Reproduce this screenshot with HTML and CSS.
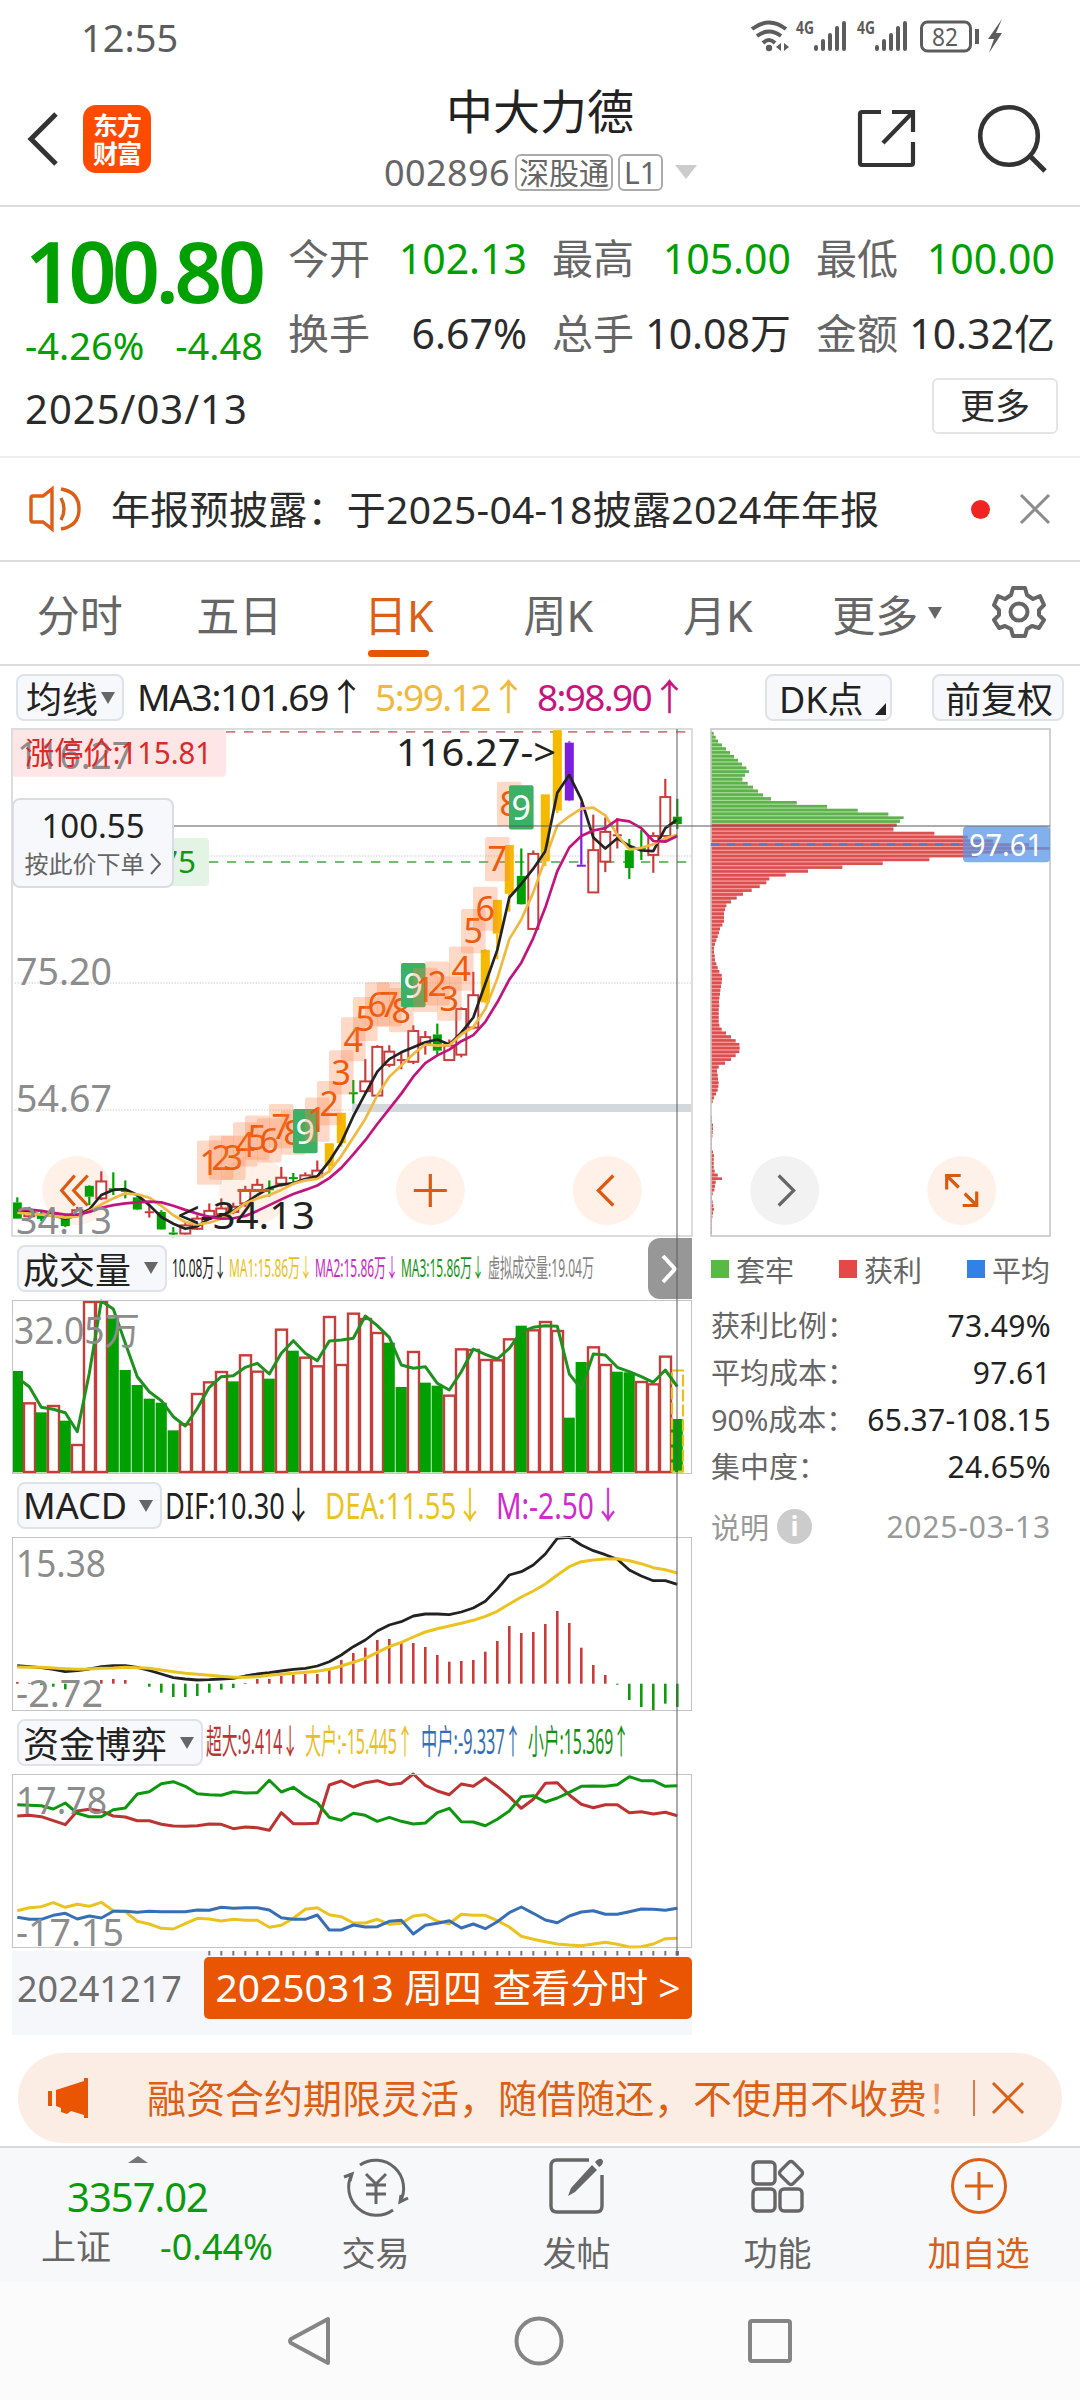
FILE: index.html
```html
<!DOCTYPE html>
<html lang="zh-CN">
<head>
    <meta charset="UTF-8">
    <title>中大力德</title>
    <link rel="stylesheet" href="styles.css">
</head>
<body>
<div class="status">
    <span class="time">12:55</span>
    <svg class="status-icons" width="256" height="36" viewBox="750 19 256 36">
        <g fill="none" stroke="#5c5c5c" stroke-width="4">
            <path d="M752 29Q769 16 786 29"/>
            <path d="M757 36Q769 27 781 36"/>
            <path d="M763 43Q769 37 775 43"/>
        </g>
        <circle cx="769" cy="48" r="3.2" fill="#5c5c5c"/>
        <path d="M781 43v8l-5-4zM784 43v8l5-4z" fill="#5c5c5c"/>
        <g class="net">
            <text x="796" y="34" textLength="18" lengthAdjust="spacingAndGlyphs">4G</text>
            <text x="857" y="34" textLength="18" lengthAdjust="spacingAndGlyphs">4G</text>
        </g>
        <path d="M816 47v2M823 41v8M830 35v14M837 28v21M844 23v26M877 47v2M884 41v8M891 35v14M898 28v21M905 23v26" stroke="#5c5c5c" stroke-width="4" stroke-linecap="round"/>
        <rect x="921.5" y="22" width="49" height="29" rx="6" fill="none" stroke="#5c5c5c" stroke-width="3"/>
        <path d="M977 29v15" stroke="#5c5c5c" stroke-width="4"/>
        <text class="bat" x="932" y="45.5" textLength="26" lengthAdjust="spacingAndGlyphs">82</text>
        <path d="M1002 19l-14 20h6l-5 14 13-20h-6z" fill="#5c5c5c"/>
    </svg>
</div>

<div class="header">
    <svg class="back" width="32" height="54" viewBox="0 0 32 54"><path d="M30 2L5 27l25 25" fill="none" stroke="#333" stroke-width="5"/></svg>
    <div class="logo">东方<br>财富</div>
    <div class="title">
        <h1>中大力德</h1>
        <p><span class="code">002896</span><i class="tag">深股通</i><i class="tag">L1</i><b class="down"></b></p>
    </div>
    <svg class="share" width="60" height="60" viewBox="0 0 60 60">
        <path d="M24 3H5q-2 0-2 2v49q0 2 2 2h49q2 0 2-2V33M35 3h21v20M56 3L26 34" fill="none" stroke="#333" stroke-width="4.2"/>
    </svg>
    <svg class="search" width="70" height="70" viewBox="0 0 70 70">
        <circle cx="32" cy="32" r="28.8" fill="none" stroke="#333" stroke-width="4.6"/>
        <path d="M53 52l15 15" stroke="#333" stroke-width="5"/>
    </svg>
</div>

<div class="quote">
    <div class="price">
        <strong>100.80</strong>
        <p><span>-4.26%</span><span>-4.48</span></p>
    </div>
    <ul class="nums">
        <li><span>今开</span><em class="green">102.13</em></li>
        <li><span>最高</span><em class="green">105.00</em></li>
        <li><span>最低</span><em class="green">100.00</em></li>
        <li><span>换手</span><em>6.67%</em></li>
        <li><span>总手</span><em>10.08万</em></li>
        <li><span>金额</span><em>10.32亿</em></li>
    </ul>
    <div class="date">2025/03/13</div>
    <a class="more">更多</a>
</div>

<div class="notice">
    <svg width="52" height="46" viewBox="0 0 52 46">
        <path d="M3 10h10L22 3v40l-9-7H3q-2 0-2-2V12q0-2 2-2zM31 12q6 11 0 22M31 3q18 3 18 20T31 43" fill="none" stroke="#dc5f16" stroke-width="3.4"/>
    </svg>
    <p>年报预披露：于2025-04-18披露2024年年报</p>
    <i class="dot"></i>
    <svg width="30" height="30" viewBox="0 0 30 30"><path d="M1 1l28 28M29 1L1 29" stroke="#8c8c8c" stroke-width="3"/></svg>
</div>

<ul class="tabs">
    <li>分时</li>
    <li>五日</li>
    <li class="current">日K</li>
    <li>周K</li>
    <li>月K</li>
    <li>更多<b class="down"></b></li>
    <li>
        <svg width="54" height="54" viewBox="-27 -27 54 54" fill="none" stroke="#666" stroke-width="4">
            <path d="M-6-24H6L8-17 14-13 21-16 25-7 20-2V3L25 8 20 16 13 14 8 17 6 24H-6L-8 17-14 14-20 16-25 8-20 3V-2L-25-7-21-16-14-13-8-17Z" stroke-linejoin="round"/>
            <circle r="8.5"/>
        </svg>
    </li>
</ul>

<div class="avg">
    <a class="btn">均线<b class="down"></b></a>
    <svg class="vals" width="560" height="46" viewBox="129 0 560 46">
        <text x="137" y="36" textLength="228" fill="#222">MA3:101.69↑</text>
        <text x="375" y="36" textLength="152" fill="#f0b93c">5:99.12↑</text>
        <text x="537" y="36" textLength="151" fill="#c8147d">8:98.90↑</text>
    </svg>
    <a class="btn dk">DK点<b class="corner"></b></a>
    <a class="btn fq">前复权</a>
</div>

<div class="charts">
    <div class="left">
        <div class="plot k">
            <svg id="kline" width="680" height="507" viewBox="12 9 680 507"></svg>
            <div class="order">
                <strong>100.55</strong>
                <p>按此价下单<svg width="13" height="22" viewBox="0 0 13 22"><path d="M2 1l9 10-9 10" fill="none" stroke="#666" stroke-width="2"/></svg></p>
            </div>
        </div>

        <div class="row">
            <a class="btn vol">成交量<b class="down"></b></a>
            <svg class="vals" width="470" height="46" viewBox="170 0 470 46" font-size="25">
                <text x="172" y="32" textLength="54" lengthAdjust="spacingAndGlyphs" fill="#222">10.08万↓</text>
                <text x="229" y="32" textLength="83" lengthAdjust="spacingAndGlyphs" fill="#ebbe1e">MA1:15.86万↓</text>
                <text x="315" y="32" textLength="83" lengthAdjust="spacingAndGlyphs" fill="#c828c8">MA2:15.86万↓</text>
                <text x="401" y="32" textLength="83" lengthAdjust="spacingAndGlyphs" fill="#149614">MA3:15.86万↓</text>
                <text x="488" y="32" textLength="106" lengthAdjust="spacingAndGlyphs" fill="#828282">虚拟成交量:19.04万</text>
            </svg>
            <div class="expand"><svg width="18" height="30" viewBox="0 0 18 30"><path d="M2 2l12 13L2 28" fill="none" stroke="#fff" stroke-width="4"/></svg></div>
        </div>
        <div class="plot sub"><svg id="vol" width="680" height="174" viewBox="12 70 680 174"></svg></div>

        <div class="row">
            <a class="btn macd">MACD<b class="down"></b></a>
            <svg class="vals" width="500" height="46" viewBox="165 0 500 46" font-size="37">
                <text x="165" y="36" textLength="147" lengthAdjust="spacingAndGlyphs" fill="#222">DIF:10.30↓</text>
                <text x="325" y="36" textLength="159" lengthAdjust="spacingAndGlyphs" fill="#ebc31e">DEA:11.55↓</text>
                <text x="496" y="36" textLength="126" lengthAdjust="spacingAndGlyphs" fill="#d228d2">M:-2.50↓</text>
            </svg>
        </div>
        <div class="plot sub"><svg id="macd" width="680" height="174" viewBox="12 57 680 174"></svg></div>

        <div class="row">
            <a class="btn fund">资金博弈<b class="down"></b></a>
            <svg class="vals" width="470" height="46" viewBox="206 0 470 46" font-size="34">
                <text x="206" y="34" textLength="92" lengthAdjust="spacingAndGlyphs" fill="#be3232">超大:9.414↓</text>
                <text x="305" y="34" textLength="108" lengthAdjust="spacingAndGlyphs" fill="#ebbe1e">大户:-15.445↑</text>
                <text x="421" y="34" textLength="100" lengthAdjust="spacingAndGlyphs" fill="#326eb4">中户:-9.337↑</text>
                <text x="528" y="34" textLength="101" lengthAdjust="spacingAndGlyphs" fill="#0f910f">小户:15.369↑</text>
            </svg>
        </div>
        <div class="plot sub"><svg id="fund" width="680" height="174" viewBox="12 64 680 174"></svg></div>

        <div class="dates">
            <svg id="ticks" width="680" height="6" viewBox="12 0 680 6"></svg>
            <div><span>20241217</span><a>20250313 周四 查看分时 &gt;</a></div>
        </div>
    </div>

    <div class="right">
        <svg id="chips" width="341" height="509" viewBox="20 8 341 509"></svg>
        <ul class="legend">
            <li><i class="c1"></i>套牢</li>
            <li><i class="c2"></i>获利</li>
            <li><i class="c3"></i>平均</li>
        </ul>
        <dl>
            <dt>获利比例：</dt><dd>73.49%</dd>
            <dt>平均成本：</dt><dd>97.61</dd>
            <dt>90%成本：</dt><dd>65.37-108.15</dd>
            <dt>集中度：</dt><dd>24.65%</dd>
        </dl>
        <p class="info"><span>说明</span><i>i</i><time>2025-03-13</time></p>
    </div>

    <!-- 十字光标 -->
    <div class="cross-x"></div>
    <div class="cross-y"></div>
</div>

<div class="banner">
    <svg width="46" height="40" viewBox="0 0 46 40"><path d="M0 13h4v15H0zM8 12L36 3V0h4v40h-4v-3l-13-4-4 3-6-2v-4l-5-2z" fill="#ea5504"/></svg>
    <p>融资合约期限灵活，随借随还，不使用不收费<span>！</span></p>
    <i></i>
    <svg width="32" height="32" viewBox="0 0 32 32"><path d="M1 1l30 30M31 1L1 31" stroke="#dc5f16" stroke-width="3"/></svg>
</div>

<div class="bar">
    <div class="index">
        <b></b>
        <strong>3357.02</strong>
        <p><span>上证</span><em>-0.44%</em></p>
    </div>
    <a>
        <svg width="66" height="60" viewBox="0 0 66 60" fill="none" stroke="#666" stroke-width="3">
            <path d="M17 9A28 28 0 0 1 57 46M50 54A28 28 0 0 1 9 18M1 21l8-3-2 7M65 42l-8 4 1-7"/>
            <path d="M23 18l10 10 10-10M33 28v20M23 29h20M23 38h20"/>
        </svg>
        交易
    </a>
    <a>
        <svg width="56" height="60" viewBox="0 0 56 60" fill="none" stroke="#666" stroke-width="3.4">
            <path d="M40 4H8q-6 0-6 6v40q0 6 6 6h39q6 0 6-6V19"/>
            <path d="M43 9l5 5L26 36l-7 4 3-8zM46 6q6-6 8-1 0 4-4 6z" fill="#666" stroke="none"/>
        </svg>
        发帖
    </a>
    <a>
        <svg width="54" height="60" viewBox="0 0 54 60" fill="none" stroke="#666" stroke-width="3.4">
            <rect x="2" y="6" width="22" height="22" rx="4"/>
            <rect x="2" y="33" width="22" height="22" rx="4"/>
            <rect x="29" y="33" width="22" height="22" rx="4"/>
            <rect x="31" y="8" width="18" height="18" rx="3" transform="rotate(45 40 17)"/>
        </svg>
        功能
    </a>
    <a class="add">
        <svg width="60" height="60" viewBox="0 0 60 60" fill="none" stroke="#dc5f16" stroke-width="3">
            <circle cx="30" cy="30" r="26.5"/>
            <path d="M16 30h28M30 16v28"/>
        </svg>
        加自选
    </a>
</div>

<div class="nav">
    <svg width="44" height="52" viewBox="0 0 44 52"><path d="M41 4v44L4 28q-2-2 0-4z" fill="none" stroke="#858585" stroke-width="4" stroke-linejoin="round"/></svg>
    <svg width="50" height="50" viewBox="0 0 50 50"><circle cx="25" cy="25" r="22.5" fill="none" stroke="#858585" stroke-width="4"/></svg>
    <svg width="46" height="46" viewBox="0 0 46 46"><rect x="3" y="3" width="40" height="40" rx="2" fill="none" stroke="#858585" stroke-width="4"/></svg>
</div>
<script src="chart.js"></script>
</body>
</html>
```
FILE: styles.css
```css
* {
    padding: 0;
    margin: 0;
    box-sizing: border-box;
    list-style: none;
}

body {
    width: 1080px;
    height: 2400px;
    overflow: hidden;
    background: #fff;
    color: #2b2b2b;
    font-family: "Noto Sans", "Noto Sans CJK SC", sans-serif;
}

svg {
    display: block;
    flex: none;
    overflow: visible;
}

em, i {
    font-style: normal;
}

.green {
    color: #00a000;
}

.down {
    display: block;
    border: 7px solid transparent;
    border-top: 12px solid #666;
    border-bottom: 0;
}

/* 状态栏 */
.status {
    height: 76px;
    padding: 0 74px 0 81px;
    display: flex;
    justify-content: space-between;
    color: #5c5c5c;
}

.status .time {
    font-size: 38px;
    line-height: 75px;
}

.status-icons {
    margin-top: 19px;
    fill: #5c5c5c;
}

.net {
    font-size: 17px;
    font-weight: bold;
}

.bat {
    font-size: 26px;
}

/* 标题 */
.header {
    height: 131px;
    border-bottom: 2px solid #dcdcdc;
    padding: 0 33px 3px 26px;
    display: flex;
    align-items: center;
}

.logo {
    width: 68px;
    height: 68px;
    margin-left: 25px;
    padding-top: 6px;
    border-radius: 13px;
    background: #ff4a00;
    color: #fff;
    font-size: 25px;
    line-height: 28px;
    font-weight: bold;
    text-align: center;
    letter-spacing: -1px;
}

.title {
    width: 320px;
    margin-left: 229px;
    text-align: center;
}

.title h1 {
    font-size: 47px;
    line-height: 60px;
    font-weight: normal;
    color: #222;
}

.title p {
    display: flex;
    align-items: center;
    padding: 6px 0 0 4px;
    height: 56px;
    color: #666;
    gap: 5px;
}

.title .code {
    font-size: 36px;
    letter-spacing: 0.4px;
}

.title .tag {
    height: 37px;
    padding: 0 2px;
    border: 2px solid #aaa;
    border-radius: 6px;
    font-size: 30px;
    line-height: 33px;
}

.title .tag + .tag {
    padding: 0 4px;
}

.title .down {
    margin-left: 7px;
    border-width: 14px 11px 0;
    border-top-color: #ccc;
}

.share {
    margin-left: auto;
}

.search {
    margin-left: 60px;
}

/* 报价 */
.quote {
    height: 251px;
    padding: 26px 23px 0 25px;
    border-bottom: 2px solid #eee;
    display: grid;
    grid-template-columns: 264px 1fr;
    grid-template-rows: 144px 60px;
    align-content: start;
}

.price {
    color: #00a000;
}

.price strong {
    display: block;
    font-size: 84px;
    line-height: 76px;
    font-weight: 600;
    letter-spacing: -4.5px;
}

.price p {
    width: 238px;
    display: flex;
    justify-content: space-between;
    font-size: 38px;
    line-height: 73px;
}

.nums {
    display: grid;
    grid-template-columns: repeat(3, 238px);
    grid-template-rows: 52px 52px;
    row-gap: 23px;
    column-gap: 26px;
    margin-top: -1px;
}

.nums li {
    display: flex;
    justify-content: space-between;
    font-size: 41px;
    line-height: 52px;
    white-space: nowrap;
}

.nums span {
    color: #666;
    margin-left: -1px;
}

.date {
    font-size: 40px;
    line-height: 64px;
    letter-spacing: 1px;
}

.more {
    justify-self: end;
    width: 126px;
    height: 56px;
    margin: 1px -1px 0 0;
    border: 2px solid #e4e4e4;
    border-radius: 6px;
    font-size: 35px;
    line-height: 51px;
    text-align: center;
}

/* 公告 */
.notice {
    height: 104px;
    padding: 0 30px;
    border-bottom: 2px solid #dcdcdc;
    display: flex;
    align-items: center;
}

.notice p {
    margin: -5px 0 0 29px;
    font-size: 39px;
    letter-spacing: 0.3px;
}

.notice .dot {
    width: 19px;
    height: 19px;
    margin: 0 30px 0 auto;
    border-radius: 50%;
    background: #f02323;
}

/* 周期 */
.tabs {
    height: 104px;
    border-bottom: 2px solid #dcdcdc;
    display: grid;
    grid-template-columns: repeat(6, 159.5px) 123px;
}

.tabs li {
    display: flex;
    align-items: center;
    justify-content: center;
    position: relative;
    font-size: 43px;
    color: #666;
    height: 102px;
}

.tabs .current {
    color: #dc5f16;
}

.tabs .current:after {
    content: "";
    position: absolute;
    left: 49px;
    bottom: 7px;
    width: 61px;
    height: 7px;
    border-radius: 4px;
    background: #e65503;
}

.tabs .down {
    margin: 0 -20px 0 10px;
}

.tabs svg {
    margin-top: -2px;
}

/* 指标按钮 */
.btn {
    flex: none;
    height: 47px;
    padding: 0 7px 0 4px;
    display: flex;
    align-items: center;
    justify-content: space-between;
    background: #f7f8fb;
    border: 2px solid #dfe2e8;
    border-radius: 8px;
    color: #222;
    font-size: 36px;
    white-space: nowrap;
}

.vol {
    width: 150px;
}

.macd {
    width: 145px;
}

.fund {
    width: 186px;
}

.avg {
    height: 63px;
    padding: 0 16px;
    display: flex;
    align-items: center;
}

.avg .btn {
    width: 108px;
    padding: 0 7px 0 8px;
}

.vals {
    white-space: pre;
}

.avg .vals {
    margin-left: 5px;
    font-size: 37px;
}

.avg .dk {
    width: 127px;
    margin-left: auto;
    padding: 0 4px 0 12px;
}

.corner {
    margin-top: 22px;
    border-left: 11px solid transparent;
    border-bottom: 12px solid #222;
}

.avg .fq {
    width: 132px;
    margin-left: 40px;
    padding: 0 9px 0 11px;
}

/* 图表 */
.charts {
    position: relative;
    height: 1324px;
    padding: 0 29px 0 12px;
    display: flex;
    justify-content: space-between;
}

.left {
    width: 680px;
}

.plot {
    outline: 2px solid #ddd;
    outline-offset: -1px;
    position: relative;
}

.k {
    height: 507px;
}

.sub {
    height: 174px;
    outline: 1.5px solid #c4c4c4;
}

.order {
    position: absolute;
    left: 0;
    top: 69px;
    width: 162px;
    height: 90px;
    padding-top: 4px;
    background: #f7f8fb;
    border: 2px solid #d9dce2;
    border-radius: 8px;
    text-align: center;
    color: #222;
}

.order strong {
    display: block;
    font-size: 33px;
    line-height: 44px;
    font-weight: normal;
}

.order p {
    display: flex;
    justify-content: center;
    align-items: center;
    gap: 4px;
    font-size: 24px;
    line-height: 32px;
    color: #666;
}

.row {
    height: 64px;
    padding-left: 5px;
    display: flex;
    align-items: center;
    position: relative;
}

.sub + .row {
    height: 63px;
}

.row .vals {
    margin-left: 3px;
}

.expand {
    position: absolute;
    right: 0;
    top: 2px;
    width: 44px;
    height: 61px;
    border-radius: 12px 0 0 12px;
    background: #979797;
    display: flex;
    align-items: center;
    justify-content: center;
}

.dates {
    height: 84px;
    margin-top: 3px;
    background: #f6f7fa;
}

.dates div {
    display: flex;
    justify-content: space-between;
    align-items: center;
    padding-left: 5px;
}

.dates span {
    font-size: 36px;
    color: #6e6e6e;
}

.dates a {
    width: 488px;
    height: 62px;
    border-radius: 5px;
    background: #e95502;
    color: #fff;
    font-size: 39px;
    line-height: 60px;
    text-align: center;
    white-space: nowrap;
}

.right {
    width: 341px;
    margin-top: -1px;
}

.legend {
    height: 64px;
    padding: 0 1px;
    display: flex;
    justify-content: space-between;
    align-items: center;
    font-size: 29px;
    color: #666;
}

.legend li {
    display: flex;
    align-items: center;
    gap: 7px;
}

.legend i {
    width: 18px;
    height: 18px;
}

.c1 {
    background: #5ab946;
}

.c2 {
    background: #e64848;
}

.c3 {
    background: #3282e6;
}

dl {
    padding: 1px 0 0 1px;
    display: grid;
    grid-template-columns: auto auto;
    grid-auto-rows: 47px;
    font-size: 29px;
    line-height: 47px;
    white-space: nowrap;
}

dt {
    color: #666;
}

dd {
    text-align: right;
    font-size: 30px;
    letter-spacing: 0.3px;
    color: #222;
}

.info {
    display: flex;
    align-items: center;
    height: 72px;
    padding-left: 1px;
    font-size: 29px;
    color: #999;
}

.info i {
    width: 35px;
    height: 35px;
    margin-left: 8px;
    border-radius: 50%;
    background: #ccc;
    color: #fff;
    font-size: 27px;
    line-height: 34px;
    font-weight: bold;
    text-align: center;
}

.info time {
    margin-left: auto;
    font-size: 30px;
    letter-spacing: 0.8px;
}

.cross-x {
    position: absolute;
    left: 174px;
    top: 96px;
    width: 876px;
    height: 2px;
    background: rgba(90, 90, 90, .5);
}

.cross-y {
    position: absolute;
    left: 676px;
    top: 0;
    width: 2px;
    height: 1227px;
    background: rgba(90, 90, 90, .5);
}

/* 广告条 */
.banner {
    width: 1044px;
    height: 90px;
    margin-left: 18px;
    padding: 0 38px 0 30px;
    border-radius: 45px;
    background: #fcede4;
    color: #dc5f16;
    display: flex;
    align-items: center;
}

.banner p {
    margin: -4px 0 0 53px;
    font-size: 39px;
    white-space: nowrap;
}

.banner span {
    opacity: .6;
}

.banner i {
    width: 2px;
    height: 36px;
    margin: 0 17px 0 auto;
    background: #dc7b44;
}

/* 底部 */
.bar {
    height: 136px;
    margin-top: 3px;
    border-top: 2px solid #d5d8dc;
    background: #f7f8fa;
    display: grid;
    grid-template-columns: 275px repeat(4, 201px);
    color: #666;
}

.bar a {
    display: flex;
    flex-direction: column;
    align-items: center;
    padding-top: 8px;
    font-size: 34px;
    line-height: 74px;
    white-space: nowrap;
}

.bar .add {
    color: #dc5f16;
}

.index {
    text-align: center;
    padding-top: 8px;
}

.index b {
    display: block;
    width: 0;
    margin: 0 auto;
    border: 10px solid transparent;
    border-top: 0;
    border-bottom: 7px solid #777;
}

.index strong {
    display: block;
    font-size: 40px;
    line-height: 68px;
    font-weight: normal;
    letter-spacing: -1px;
    color: #0a9b0a;
}

.index p {
    display: flex;
    justify-content: space-between;
    padding: 0 2px 0 41px;
    font-size: 35px;
    line-height: 32px;
}

.index em {
    font-size: 36px;
    color: #0a9b0a;
}

.nav {
    height: 119px;
    padding-bottom: 1px;
    background: #fbfbfb;
    display: flex;
    align-items: center;
    justify-content: center;
    gap: 183px;
}
```
FILE: chart.js
```js
// 每根K线间隔12px，副图y值按1/3像素记录，主图按1/2.958像素
var RED = '#c83c3c', GREEN = '#00a000', GOLD = '#f5b900', PURPLE = '#7d1edc';
var K = 2.958;

function X(i) {
    return 17.3 + 12 * i;
}

function rect(x, y, w, h, attr) {
    return '<rect x="' + x + '" y="' + y + '" width="' + w + '" height="' + h + '" ' + attr + '/>';
}

function line(x1, y1, x2, y2, attr) {
    return '<path d="M' + x1 + ' ' + y1 + 'L' + x2 + ' ' + y2 + '" ' + attr + '/>';
}

function text(x, y, len, size, color, str) {
    return '<text x="' + x + '" y="' + y + '" textLength="' + len + '" lengthAdjust="spacingAndGlyphs" font-size="' + size + '" fill="' + color + '">' + str + '</text>';
}

function curve(arr, color, w, k) {
    var p = arr.map(function (v, i) {
        return X(i) + ',' + (v / (k || 3)).toFixed(1);
    });
    return '<polyline points="' + p.join(' ') + '" fill="none" stroke="' + color + '" stroke-width="' + w + '" stroke-linejoin="round"/>';
}

// 类型, 最高, 实体上, 实体下, 最低
var candles = [
    ['g',1412,1427,1475,1475],['r',1440,1452,1468,1475],['g',1455,1465,1476,1482],['r',1445,1456,1464,1480],
    ['g',1465,1475,1497,1500],['r',1440,1450,1465,1470],['g',1376,1378,1410,1435],['r',1335,1365,1415,1420],
    ['g',1338,1385,1391,1405],['g',1362,1390,1396,1415],['g',1400,1412,1448,1450],['r',1435,1453,1457,1472],
    ['g',1450,1455,1507,1508],['g',1500,1516,1520,1530],['r',1488,1495,1519,1522],['r',1465,1475,1505,1508],
    ['r',1430,1452,1468,1480],['r',1415,1445,1462,1475],['r',1428,1440,1455,1462],['r',1378,1390,1430,1440],
    ['r',1357,1375,1390,1395],['g',1362,1385,1391,1410],['r',1322,1354,1372,1380],['g',1340,1352,1358,1370],
    ['r',1338,1347,1360,1365],['r',1303,1333,1350,1355],['y',1252,1252,1320,1340],['y',1162,1162,1252,1262],
    ['g',1065,1101,1105,1135],['r',1003,1069,1098,1105],['r',962,967,1111,1113],['r',962,981,1020,1027],
    ['r',985,1003,1009,1033],['r',903,920,1011,1018],['r',920,938,958,990],['g',898,930,978,990],
    ['r',945,963,1006,1008],['r',850,855,990,998],['r',745,814,910,915],['y',678,680,835,838],
    ['y',532,532,632,708],['y',370,370,514,567],['g',380,461,545,546],['r',386,396,618,620],
    ['y',220,220,418,432],['y',30,30,268,275],['p',63,67,238,240],['p',243,428,434,434],
    ['r',280,385,510,511],['r',288,331,419,450],['r',290,338,344,380],['g',352,385,438,470],
    ['g',325,378,384,414],['r',332,343,399,452],['r',174,228,343,362],['g',233,286,308,322]
];
var ma3 = [1453,1458,1463,1465,1475,1465,1448,1405,1390,1388,1405,1435,1470,1490,1505,1498,1475,1466,1452,1430,1405,1385,1375,1370,1358,1350,1305,1250,1172,1105,1040,1003,983,968,953,945,960,925,880,780,680,525,485,440,388,215,163,235,348,380,350,372,386,388,320,295];
var ma5 = [1457,1460,1463,1466,1472,1468,1452,1433,1415,1400,1403,1413,1437,1465,1485,1492,1487,1475,1455,1430,1415,1405,1390,1372,1362,1357,1335,1290,1235,1180,1110,1055,1022,988,960,963,962,930,908,855,765,648,590,510,410,312,285,262,259,282,340,383,378,368,350,340];
var ma8 = [1450,1448,1452,1458,1463,1463,1455,1443,1435,1430,1427,1425,1427,1437,1449,1460,1470,1475,1474,1467,1452,1435,1418,1402,1390,1377,1355,1325,1285,1243,1195,1150,1105,1055,1015,992,975,950,932,893,835,768,718,645,555,447,377,343,327,320,295,300,320,358,360,343];

// 九转标签，从第16根开始
var nine = [[1,1244],[2,1229],[3,1230],[4,1190],[5,1170],[6,1178],[7,1136],[8,1155],[9,1151],
    [1,1117],[2,1068],[3,977],[4,879],[5,819],[6,776],[7,776],[8,793],[9,719],
    [1,733],[2,714],[3,759],[4,670],[5,559],[6,493],[7,346],[8,183],[9,193]];

function roundBtn(x, d, bg, color) {
    return '<circle cx="' + x + '" cy="470.5" r="34.5" fill="' + bg + '"/><path transform="translate(' + x + ' 470.5)" d="' + d + '" fill="none" stroke="' + color + '" stroke-width="3.2"/>';
}

function drawK() {
    var s = '';
    [136, 263, 390].forEach(function (y) {
        s += line(12, y, 692, y, 'stroke="#ddd" stroke-width="1.4" stroke-dasharray="1.4 1.4"');
    });
    s += rect(352, 384, 340, 8, 'fill="#d3d8dc"');
    var tint = 'rgba(255,226,210,.5)';
    s += roundBtn(76.7, '', tint, '') + roundBtn(253.5, '', tint, '');
    s += line(226, 11.8, 692, 11.8, 'stroke="#c98080" stroke-width="1.8" stroke-dasharray="9.3 8.7"');
    s += line(209, 142, 692, 142, 'stroke="#78b878" stroke-width="1.8" stroke-dasharray="9.3 8.7"');
    candles.forEach(function (c, i) {
        var x = X(i), col = {r: RED, g: GREEN, y: GOLD, p: PURPLE}[c[0]];
        var h = c[1] / K, t = c[2] / K, b = c[3] / K, l = c[4] / K;
        s += line(x, h, x, t, 'stroke="' + col + '" stroke-width="2.2"');
        s += line(x, b, x, l, 'stroke="' + col + '" stroke-width="2.2"');
        if (c[0] == 'r' && b - t > 3) {
            s += rect(x - 5, t, 10, b - t, 'fill="#fff" stroke="' + col + '" stroke-width="2"');
        } else {
            s += rect(x - 4.5, t, 9, Math.max(b - t, 2), 'fill="' + col + '"');
        }
    });
    nine.forEach(function (n, k) {
        var x = X(k + 16), y = n[1] / K, last = n[0] == 9;
        s += rect(x - 12.3, y, 24.6, 44.2, 'rx="2" fill="' + (last ? '#3cb064' : 'rgba(253,130,72,.3)') + '"');
        s += '<text x="' + x + '" y="' + (y + 34.5) + '" text-anchor="middle" font-size="34" fill="' + (last ? '#fff' : '#f05a0a') + '">' + n[0] + '</text>';
    });
    s += curve(ma3, '#232323', 2.7, K) + curve(ma5, '#f0b941', 2.7, K) + curve(ma8, '#c3147d', 2.7, K);
    s += rect(12, 9.3, 214, 47.5, 'rx="4" fill="rgba(255,205,205,.5)"');
    s += rect(12, 118, 197, 48, 'rx="4" fill="#e4f4e4"');
    s += text(17, 48.5, 116, 39, '#8c8c8c', '116.27');
    s += text(25, 43.5, 187, 31, '#dc2828', '涨停价:115.81');
    s += text(160, 153, 36, 31, '#149614', '75');
    s += text(16, 264.5, 96, 39, '#8c8c8c', '75.20');
    s += text(16, 391.5, 96, 39, '#8c8c8c', '54.67');
    s += text(16, 514, 96, 39, '#8c8c8c', '34.13');
    s += text(396, 46, 160, 39, '#222', '116.27-&gt;');
    s += text(177, 508.5, 138, 39, '#222', '&lt;-34.13');
    s += roundBtn(76.7, 'M-2-15L-15 0-2 15M11-15L-3 0 11 15', 'none', '#dc5a0f');
    s += roundBtn(253.5, 'M-16 0h32', 'none', '#dc5a0f');
    s += roundBtn(430.3, 'M-16.5 0h33M0-16.5v33', tint, '#dc5a0f');
    s += roundBtn(607.3, 'M6-15L-9 0 6 15', tint, '#dc5a0f');
    document.getElementById('kline').innerHTML = s;
}

var vol = 'g423 r517 g547 r525 g572 r642 r213 r213 g265 g420 g465 g506 g518 g601 r580 r489 r454 r423 g454 r373 r422 g446 r296 g362 r380 r406 r258 r402 r248 r264 r306 g338 g471 r363 g458 g467 r494 r355 r357 r387 r388 r325 g287 r298 r273 r300 g563 g396 r349 r402 g425 g427 r453 r460 r377 g567'.split(' ');
var volMa = [443,470,532,538,548,605,430,213,237,340,440,485,512,560,588,535,472,440,437,412,400,432,370,332,370,392,333,330,325,258,287,322,405,415,410,460,480,425,357,373,387,355,305,292,287,289,432,477,372,375,412,425,440,457,420,470];

function drawVol() {
    var s = '';
    vol.forEach(function (v, i) {
        var y = v.slice(1) / 3, x = X(i);
        if (v.charAt(0) == 'r') {
            s += rect(x - 5.3, y + 1, 11, 241 - y, 'fill="#fff" stroke="' + RED + '" stroke-width="2.4"');
        } else {
            s += rect(i ? x - 5.7 : 12, y, i ? 11.2 : 11, 242.3 - y, 'fill="' + GREEN + '"');
        }
    });
    s += rect(672, 140.5, 11, 101, 'fill="none" stroke="#ebbe1e" stroke-width="2.2" stroke-dasharray="12 3"');
    s += curve(volMa, '#1e911e', 3);
    s += text(14, 114, 126, 38, '#8c8c8c', '32.05万');
    document.getElementById('vol').innerHTML = s;
}

var dif = [557,560,563,568,575,572,567,560,557,557,562,571,582,593,597,600,599,597,595,588,582,578,573,568,565,558,545,525,500,480,453,435,425,408,402,402,404,396,384,364,327,285,275,255,222,175,172,195,212,224,238,270,288,302,302,313];
var dea = [561,562,562,564,566,568,567,565,564,562,563,565,570,575,580,583,586,589,592,592,590,586,583,580,577,574,568,558,547,535,517,500,487,471,456,446,438,430,421,409,394,372,351,333,312,285,260,245,240,237,236,242,251,263,269,279];
var hist = [606,609,615,620,628,611,611,600,597,600,611,620,638,651,651,648,638,629,624,609,597,597,588,585,582,582,570,540,519,503,480,477,486,489,501,525,545,543,540,515,483,438,459,456,432,393,429,503,555,585,614,660,681,690,671,681];

function drawMacd() {
    var s = '';
    hist.forEach(function (v, i) {
        s += line(X(i), 203.7, X(i), v / 3, 'stroke="' + (v < 611 ? RED : '#0f9b0f') + '" stroke-width="2.6"');
    });
    s += text(16, 97, 90, 38, '#8c8c8c', '15.38') + text(16, 227, 87, 38, '#8c8c8c', '-2.72');
    s += curve(dif, '#222', 2.8) + curve(dea, '#ebc31e', 3);
    document.getElementById('macd').innerHTML = s;
}

var fund = [
    ['#ebc31e', [602,593,590,578,592,583,589,577,602,605,634,642,655,657,641,625,627,633,628,631,631,652,646,625,598,593,614,620,639,639,628,643,640,618,614,634,641,613,616,616,632,651,679,688,695,702,705,707,702,697,703,711,710,702,686,685]],
    ['#376eb4', [622,628,628,616,610,627,618,624,604,604,607,604,605,605,605,600,601,592,595,593,593,600,623,628,628,615,660,660,645,651,650,634,631,672,646,640,632,654,642,656,635,608,591,610,630,638,618,606,602,613,613,605,597,598,601,595]],
    ['#be3232', [318,316,320,332,344,303,298,303,318,321,332,332,343,348,349,347,342,343,356,351,353,361,308,341,341,340,225,213,231,218,212,224,220,192,226,243,254,222,229,204,230,260,295,268,220,218,255,283,293,284,284,308,305,312,307,317]],
    ['#0f960f', [284,286,287,297,279,310,320,320,299,294,252,245,221,215,229,251,254,256,245,249,248,211,246,232,258,278,322,331,310,316,334,322,334,342,339,308,295,335,336,347,328,303,260,257,276,264,247,229,228,229,224,200,212,212,229,227]]
];

function drawFund() {
    var s = '';
    fund.forEach(function (f) {
        s += curve(f[1], f[0], 3);
    });
    s += text(16, 104, 91, 38, '#8c8c8c', '17.78') + text(16, 236, 108, 38, '#8c8c8c', '-17.15');
    document.getElementById('fund').innerHTML = s;

    s = '';
    for (var i = 16; i < 56; i++) {
        s += line(X(i), 0, X(i), 4.5, 'stroke="#777" stroke-width="' + (i == 25 || i == 55 ? 3.4 : 2) + '"');
    }
    document.getElementById('ticks').innerHTML = s;
}

// 筹码分布
var chips = [8,14,21,33,45,57,69,81,93,106,114,102,94,110,126,141,156,180,257,348,440,532,578,567,
    557,547,670,770,846,954,1018,910,800,655,515,394,291,224,175,166,146,122,96,77,60,46,42,39,39,39,34,27,24,20,16,12,9,9,11,12,16,20,25,32,33,32,30,28,27,25,24,25,23,23,23,23,25,32,45,60,74,85,86,85,74,60,42,23,18,20,21,23,22,20,15,9,5,0,0,0,3,3,6,6,5,4,2,2,2,6,9,8,8,8,11,20,33,14,12,10,5,3,5,7,9,6,4,3,3,3,3];

function drawChips() {
    var s = '', bars = '';
    chips.forEach(function (w, i) {
        var y = (39 + 11.36 * i) / K, up = i < 24;
        var lw = Math.min(w, chips[i + 1] || 0);
        s += rect(21, y, lw / 3, 3.84, 'fill="' + (up ? '#a0dc92' : '#ff9c9c') + '"');
        bars += rect(21, y - 1.3, w / 3, 2.6, 'fill="' + (up ? '#60b04e' : '#d85050') + '"');
    });
    s += bars;
    s += rect(21, 9, 339, 507, 'fill="none" stroke="#c6c6c6" stroke-width="1.6"');
    s += line(21, 124.7, 273, 124.7, 'stroke="#4b7dcd" stroke-width="2.8" stroke-dasharray="8 8"');
    s += rect(273, 106.3, 87, 36, 'rx="4" fill="rgba(88,150,230,.75)"');
    s += text(279, 136, 74, 31, '#fff', '97.61');
    s += roundBtn(94.7, 'M-6-15L9 0-6 15', '#f2f2f2', '#666');
    s += roundBtn(271.7, 'M-3-3L-14-14M-15-1V-15H-1M3 3L14 14M15 1V15H1', '#fef1ea', '#dc5a0f');
    document.getElementById('chips').innerHTML = s;
}

drawK();
drawVol();
drawMacd();
drawFund();
drawChips();
```
